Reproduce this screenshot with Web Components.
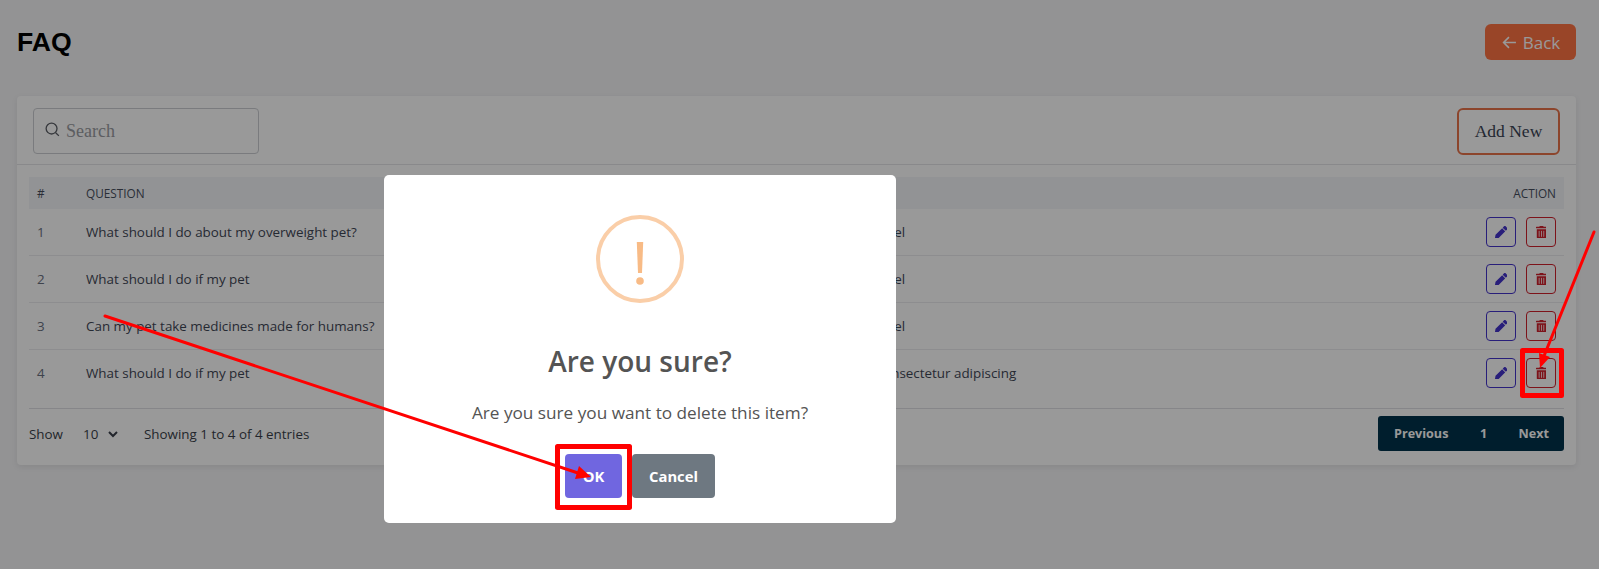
<!DOCTYPE html>
<html>
<head>
<meta charset="utf-8">
<title>FAQ</title>
<style>
  html, body { margin: 0; height: 100%; }
  body { background: #f5f5f7; font-family: "Open Sans", "Liberation Sans", sans-serif; overflow: hidden; }
</style>
</head>
<body>
<faq-page>
  <page-header title="FAQ"></page-header>
  <faq-card>
    <search-box slot="tools"></search-box>
    <add-button slot="tools">Add New</add-button>
    <faq-table>
      <faq-row num="1" question="What should I do about my overweight pet?" answer="dolor sit amet, a vel"></faq-row>
      <faq-row num="2" question="What should I do if my pet" answer="dolor sit amet, a vel"></faq-row>
      <faq-row num="3" question="Can my pet take medicines made for humans?" answer="dolor sit amet, a vel"></faq-row>
      <faq-row num="4" question="What should I do if my pet" answer="dolor sit amet, consectetur adipiscing"></faq-row>
    </faq-table>
    <table-footer slot="footer"></table-footer>
  </faq-card>
</faq-page>
<confirm-dialog></confirm-dialog>
<annotation-layer></annotation-layer>

<script>
const PENCIL = 'M497.9 142.1l-46.1 46.1c-4.7 4.7-12.3 4.7-17 0l-111-111c-4.7-4.7-4.7-12.3 0-17l46.1-46.1c18.7-18.7 49.1-18.7 67.9 0l60.1 60.1c18.8 18.7 18.8 49.1 0 68zM284.2 99.8L21.6 362.4.4 483.9c-2.9 16.4 11.4 30.6 27.8 27.8l121.5-21.3 262.6-262.6c4.7-4.7 4.7-12.3 0-17l-111-111c-4.8-4.7-12.4-4.7-17.1 0z';
const TRASH = 'M32 464a48 48 0 0 0 48 48h288a48 48 0 0 0 48-48V128H32zm272-256a16 16 0 0 1 32 0v224a16 16 0 0 1-32 0zm-96 0a16 16 0 0 1 32 0v224a16 16 0 0 1-32 0zm-96 0a16 16 0 0 1 32 0v224a16 16 0 0 1-32 0zM432 32H312l-9.4-18.7A24 24 0 0 0 281.1 0H166.8a23.72 23.72 0 0 0-21.4 13.3L136 32H16A16 16 0 0 0 0 48v32a16 16 0 0 0 16 16h416a16 16 0 0 0 16-16V48a16 16 0 0 0-16-16z';
const COLS = '49px 697px 1fr auto';

class Base extends HTMLElement {
  constructor() {
    super();
    this.attachShadow({ mode: 'open' });
  }
  connectedCallback() {
    this.shadowRoot.innerHTML = `<style>${this._style()}</style>${this._html()}`;
  }
}

class FaqPage extends Base {
  _style() { return `:host { display: block; padding: 0 23px 0 17px; }`; }
  _html() { return `<slot></slot>`; }
}

class PageHeader extends Base {
  _style() {
    return `
      :host { display: flex; justify-content: space-between; align-items: center; padding-top: 24px; height: 36px; margin-bottom: 36px; }
      h1 { margin: 0; font: 700 26.6px/36px "Liberation Sans", sans-serif; color: #000; }
      .back { display: flex; align-items: center; justify-content: center; gap: 6px; width: 91px; height: 36px; box-sizing: border-box; padding-left: 1px;
        border-radius: 6px; background: #ff7444; color: #fff; font-size: 17px; }
      svg { width: 15px; height: 15px; }
    `;
  }
  _html() {
    return `<h1>${this.getAttribute('title')}</h1>
      <div class="back"><svg viewBox="0 0 14 14" fill="none" stroke="currentColor" stroke-width="1.5"><path d="M13 7H1.5M6.5 2 1.5 7l5 5"/></svg>Back</div>`;
  }
}

class FaqCard extends Base {
  _style() {
    return `
      :host { display: block; background: #fff; border-radius: 4px; height: 369px; box-sizing: border-box; box-shadow: 0 2px 6px rgba(0,0,0,.08); }
      .tools { display: flex; justify-content: space-between; padding: 12px 16px 0; height: 56px; border-bottom: 1px solid #e4e4e8; }
      .body { padding: 12px 12px 0; }
    `;
  }
  _html() {
    return `<div class="tools"><slot name="tools"></slot></div>
      <div class="body"><slot></slot><slot name="footer"></slot></div>`;
  }
}

class SearchBox extends Base {
  _style() {
    return `
      :host { display: flex; align-items: center; gap: 6px; box-sizing: border-box; width: 226px; height: 46px; padding-left: 11px;
        border: 1px solid #ccced2; border-radius: 4px; color: #9a9ca2; font: 18px "Liberation Serif", serif; }
      svg { width: 15px; height: 15px; color: #5c5f66; margin-top: -3px; }
    `;
  }
  _html() {
    return `<svg viewBox="0 0 16 16" fill="none" stroke="currentColor" stroke-width="1.4"><circle cx="7" cy="7" r="5.8"/><path d="m11.4 11.4 3.4 3.4"/></svg><span>Search</span>`;
  }
}

class AddButton extends Base {
  _style() {
    return `
      :host { display: flex; align-items: center; justify-content: center; box-sizing: border-box; width: 103px; height: 47px;
        border: 2px solid #e9734a; border-radius: 6px; color: #3a4354; font: 17.5px "Liberation Serif", serif; }
    `;
  }
  _html() { return `<slot></slot>`; }
}

class FaqTable extends Base {
  _style() {
    return `
      :host { display: block; }
      .head { display: grid; grid-template-columns: ${COLS}; align-items: center; height: 32px; padding: 0 8px; background: #f3f5f8;
        font-size: 11.8px; font-weight: 500; color: #474e5d; }
      .head :last-child { text-align: right; }
    `;
  }
  _html() {
    return `<div class="head"><span>#</span><span>QUESTION</span><span>ANSWER</span><span>ACTION</span></div><slot></slot>`;
  }
}

class FaqRow extends Base {
  _style() {
    return `
      :host { display: grid; grid-template-columns: ${COLS}; align-items: center; height: 47px; box-sizing: border-box; padding: 0 8px;
        border-bottom: 1px solid #ececef; font-size: 13.4px; color: #3f4756; }
      :host(:last-child) { border-bottom: 0; height: 46px; }
      .num { color: #6a7080; }
      .actions { display: flex; gap: 10px; }
    `;
  }
  _html() {
    return `<span class="num">${this.getAttribute('num')}</span>
      <span>${this.getAttribute('question')}</span>
      <span>${this.getAttribute('answer')}</span>
      <span class="actions"><icon-button kind="edit"></icon-button><icon-button kind="delete"></icon-button></span>`;
  }
}

class IconButton extends Base {
  _style() {
    const color = this.getAttribute('kind') === 'edit' ? '#4433cc' : '#d0202c';
    return `
      :host { display: flex; align-items: center; justify-content: center; box-sizing: border-box; width: 30px; height: 30px;
        border: 1px solid ${color}; border-radius: 4px; color: ${color}; }
      svg { height: 12.5px; }
    `;
  }
  _html() {
    const edit = this.getAttribute('kind') === 'edit';
    return `<svg viewBox="0 0 ${edit ? 512 : 448} 512" fill="currentColor"><path d="${edit ? PENCIL : TRASH}"/></svg>`;
  }
}

class TableFooter extends Base {
  _style() {
    return `
      :host { display: flex; align-items: center; margin-top: 12px; height: 49px; border-top: 1px solid #e0e0e4; font-size: 13.4px; color: #3a3f4a; }
      .size { display: flex; align-items: center; margin-left: 20px; gap: 10px; width: 61px; }
      svg { width: 10px; height: 10px; }
      .pager { margin-left: auto; display: flex; align-items: center; height: 35px; width: 186px; box-sizing: border-box; padding: 0 15px 0 16px; justify-content: space-between;
        background: #00324b; border-radius: 3px; color: #fff; font-weight: 700; font-size: 12.6px; }
    `;
  }
  _html() {
    return `<span>Show</span>
      <span class="size">10<svg viewBox="0 0 10 10" fill="none" stroke="currentColor" stroke-width="2"><path d="m1 3 4 4 4-4"/></svg></span>
      <span>Showing 1 to 4 of 4 entries</span>
      <div class="pager"><span>Previous</span><span>1</span><span>Next</span></div>`;
  }
}

class ConfirmDialog extends Base {
  _style() {
    return `
      :host { position: fixed; inset: 0; background: rgba(0,0,0,.4); display: flex; align-items: flex-start; padding: 175px 0 0 384px; }
      .modal { width: 512px; height: 348px; box-sizing: border-box; padding-top: 40px; background: #fff; border-radius: 5px; text-align: center; color: #545454; }
      .icon { width: 88px; height: 88px; margin: 0 auto; box-sizing: border-box; border: 4px solid #facea8; border-radius: 50%; color: #f8bb86;
        display: flex; align-items: center; justify-content: center; }
      h2 { margin: 40px 0 0; font-size: 28px; line-height: 36px; font-weight: 600; }
      p { margin: 22px 0 0; font-size: 17.2px; line-height: 24px; }
      .buttons { display: flex; justify-content: center; gap: 10px; margin-top: 29px; }
      button { height: 44px; border: 0; border-radius: 4px; color: #fff; font: 700 14.8px "Open Sans", sans-serif; padding: 0; }
      .ok { width: 57px; background: #7066e0; }
      .cancel { width: 83px; background: #6e7881; }
    `;
  }
  _html() {
    return `<div class="modal">
      <div class="icon"><svg width="8" height="52" viewBox="0 0 8 52"><path d="M.8 9h6.4L6 40H2z" fill="currentColor"/><circle cx="4" cy="48" r="3.8" fill="currentColor"/></svg></div>
      <h2>Are you sure?</h2>
      <p>Are you sure you want to delete this item?</p>
      <div class="buttons"><button class="ok">OK</button><button class="cancel">Cancel</button></div>
    </div>`;
  }
}

// red marks drawn on top of the screenshot, free canvas
class AnnotationLayer extends Base {
  _style() {
    return `
      :host { position: fixed; inset: 0; pointer-events: none; }
      svg { position: absolute; left: 0; top: 0; }
    `;
  }
  _html() {
    return `<svg width="1599" height="569" viewBox="0 0 1599 569">
      <g fill="none" stroke="#f00" stroke-linejoin="round">
        <rect x="557.5" y="446.5" width="72" height="61" stroke-width="5"/>
        <rect x="1522.5" y="350.5" width="39" height="45" stroke-width="5"/>
        <path d="M105 316 578 473" stroke-width="3" stroke-linecap="round"/>
        <path d="M1594 232 1544 356" stroke-width="3" stroke-linecap="round"/>
      </g>
      <path d="M591 477 575 479 579 466z" fill="#f00"/>
      <path d="M1540 368 1539 353 1550 357z" fill="#f00"/>
    </svg>`;
  }
}

customElements.define('faq-page', FaqPage);
customElements.define('page-header', PageHeader);
customElements.define('faq-card', FaqCard);
customElements.define('search-box', SearchBox);
customElements.define('add-button', AddButton);
customElements.define('faq-table', FaqTable);
customElements.define('faq-row', FaqRow);
customElements.define('icon-button', IconButton);
customElements.define('table-footer', TableFooter);
customElements.define('confirm-dialog', ConfirmDialog);
customElements.define('annotation-layer', AnnotationLayer);
</script>
</body>
</html>
